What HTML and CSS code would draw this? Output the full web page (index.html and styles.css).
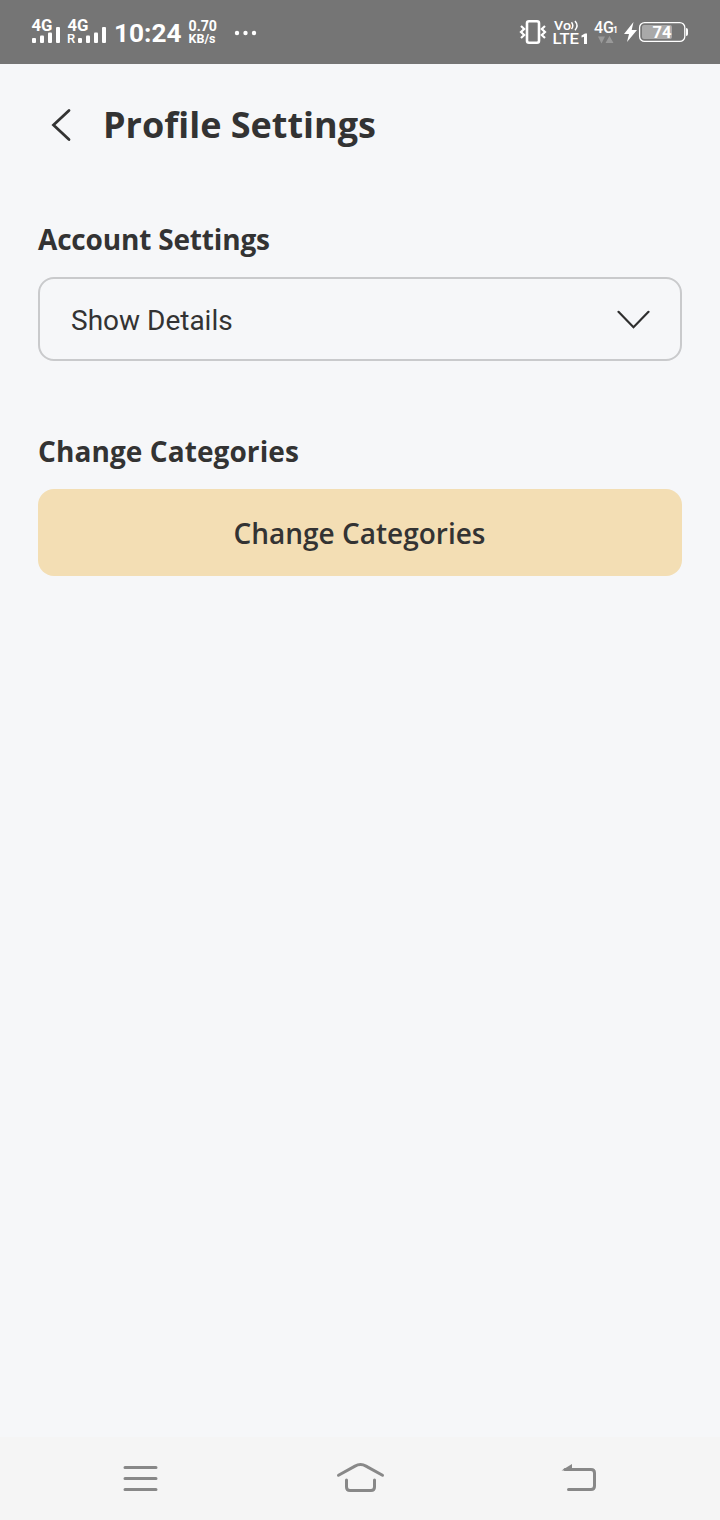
FILE: index.html
```html
<!DOCTYPE html>
<html lang="en">
<head>
<meta charset="utf-8">
<title>Profile Settings</title>
<link rel="stylesheet" href="styles.css">
</head>
<body>
<div class="status-bar">
  <svg class="status-group" width="240" height="64" viewBox="24 0 240 64">
    <text x="31.5" y="31" font-size="16.5" textLength="21" lengthAdjust="spacingAndGlyphs">4G</text>
    <rect x="32" y="38" width="4" height="5" rx="1"/>
    <rect x="40" y="35.5" width="4" height="7.5" rx="1"/>
    <rect x="48" y="32.5" width="4" height="10.5" rx="1"/>
    <rect x="56" y="27" width="4" height="16" rx="1"/>
    <text x="67.5" y="31" font-size="16.5" textLength="21" lengthAdjust="spacingAndGlyphs">4G</text>
    <text x="67" y="43" font-size="13" class="medium">R</text>
    <rect x="78" y="38" width="4" height="5" rx="1"/>
    <rect x="86" y="35.5" width="4" height="7.5" rx="1"/>
    <rect x="94" y="32.5" width="4" height="10.5" rx="1"/>
    <rect x="102" y="27" width="4" height="16" rx="1"/>
    <text x="114" y="42" font-size="26.5" textLength="67.5" lengthAdjust="spacingAndGlyphs">10:24</text>
    <text x="188.5" y="31" font-size="14" textLength="28.5" lengthAdjust="spacingAndGlyphs">0.70</text>
    <text x="188.5" y="43" font-size="12.5" textLength="27" lengthAdjust="spacingAndGlyphs">KB/s</text>
    <circle cx="237" cy="33" r="2.2"/><circle cx="245.5" cy="33" r="2.2"/><circle cx="254" cy="33" r="2.2"/>
  </svg>
  <svg class="status-group" width="180" height="64" viewBox="516 0 180 64">
    <rect class="line" x="527" y="21.2" width="12" height="21.6" rx="2" stroke-width="2.6"/>
    <path class="line" d="M521 26l3.2 3-3.2 3 3.2 3-3.2 3M545 26l-3.2 3 3.2 3-3.2 3 3.2 3" stroke-width="2.2"/>
    <text x="554" y="29.5" font-size="13" class="medium" textLength="17" lengthAdjust="spacingAndGlyphs">Vo</text>
    <path class="line" d="M571.5 22.2q2.6 3.4 0 6.8M575 21q4 4.6 0 9.2" stroke-width="1.5"/>
    <text x="552.5" y="44" font-size="15.5" class="medium" textLength="26.5" lengthAdjust="spacingAndGlyphs">LTE</text>
    <path d="M581.5 35.5l3.5-2h2V44h-3v-7.2l-2.5.8z"/>
    <text x="594" y="33" font-size="17" class="medium" textLength="20" lengthAdjust="spacingAndGlyphs">4G</text>
    <text x="613" y="33" font-size="8.5">1</text>
    <path class="dim" d="M598 36.5h7l-3.5 7zM605.5 43l4-7 4 7z"/>
    <path d="M633.5 22l-9.5 12h5l-2 8 10-12h-5.3z"/>
    <rect class="charge" x="642" y="25" width="30" height="14" rx="2"/>
    <rect class="line" x="639.6" y="22.6" width="45.2" height="18.8" rx="5" stroke-width="1.3"/>
    <path d="M686 28q2 0 2 2v4q0 2-2 2z"/>
    <text x="652.5" y="37.5" font-size="17" textLength="19" lengthAdjust="spacingAndGlyphs">74</text>
  </svg>
</div>
<header class="header">
  <svg class="back" width="24" height="36" viewBox="0 0 24 36" aria-label="Back"><path d="M21 3.5L5.5 18 21 32.5" fill="none" stroke="#333" stroke-width="2.8" stroke-linecap="round"/></svg>
  <h1 class="title">Profile Settings</h1>
</header>
<main class="content">
  <section class="section">
    <h2 class="label label-account">Account Settings</h2>
    <div class="select">
      <span class="select-text">Show Details</span>
      <svg width="34" height="20" viewBox="0 0 34 20"><path d="M2.5 2.8L17.5 18.2 32.5 2.8" fill="none" stroke="#2f2f2f" stroke-width="2.2" stroke-linecap="round"/></svg>
    </div>
  </section>
  <section class="section">
    <h2 class="label label-categories">Change Categories</h2>
    <button class="button" type="button">Change Categories</button>
  </section>
</main>
<nav class="nav">
  <svg width="48" height="40" viewBox="116 1458 48 40"><path d="M125 1467.5h31M125 1478.5h31M125 1489.5h31"/></svg>
  <svg width="56" height="40" viewBox="332 1458 56 40"><path d="M338.5 1475.3l16.5-9.2q5.5-3.2 11 0l16.5 9.2M346.5 1480v7q0 3.5 3.5 3.5h21q3.5 0 3.5-3.5v-7"/></svg>
  <svg width="48" height="40" viewBox="556 1458 48 40"><path d="M565 1469.5h26q3.5 0 3.5 3.5v13q0 3.5-3.5 3.5h-22.5"/><path class="tip" d="M561.5 1470.5l10.5-6.5v6z"/></svg>
</nav>
</body>
</html>
```
FILE: styles.css
```css
* { box-sizing: border-box; }
body {
  margin: 0;
  height: 1520px;
  display: flex;
  flex-direction: column;
  background: #f6f7f9;
  color: #333;
  font-family: "Open Sans", "Noto Sans", sans-serif;
}
.status-bar {
  height: 64px;
  padding: 0 24px;
  display: flex;
  justify-content: space-between;
  background: #757575;
}
.status-group { display: block; fill: #fff; font-family: Roboto, sans-serif; font-weight: 700; }
.medium { font-weight: 500; }
.line { fill: none; stroke: #fff; }
.dim { fill: #999; }
.charge { fill: #a9a9a9; }
.header {
  height: 122px;
  padding: 0 48px;
  display: flex;
  align-items: center;
  gap: 31px;
}
.back { flex: none; }
.title { margin: 0; font-size: 36px; line-height: 50px; font-weight: 700; }
.content { flex: 1; padding: 31px 38px 0; }
.section { margin-bottom: 68px; }
.label { margin: 0 0 16px; font-size: 28px; line-height: 44px; font-weight: 700; }
.label-account { letter-spacing: -0.18px; }
.label-categories { letter-spacing: 0.08px; }
.select {
  height: 84px;
  padding: 0 30px 0 31px;
  display: flex;
  align-items: center;
  justify-content: space-between;
  border: 2px solid #c9cacc;
  border-radius: 16px;
}
.select-text { font-family: Roboto, sans-serif; font-size: 28px; padding-top: 3px; }
.button {
  display: block;
  width: 100%;
  height: 87px;
  padding: 1px 1px 0 0;
  border: 0;
  border-radius: 16px;
  background: #f3deb4;
  color: #333;
  font: 600 28px "Open Sans", sans-serif;
}
.nav {
  height: 83px;
  padding: 0 116px 2px;
  display: flex;
  align-items: center;
  justify-content: space-between;
  background: #f5f5f5;
}
.nav path { fill: none; stroke: #888; stroke-width: 3; stroke-linecap: round; }
.nav .tip { fill: #888; stroke: none; }
```
